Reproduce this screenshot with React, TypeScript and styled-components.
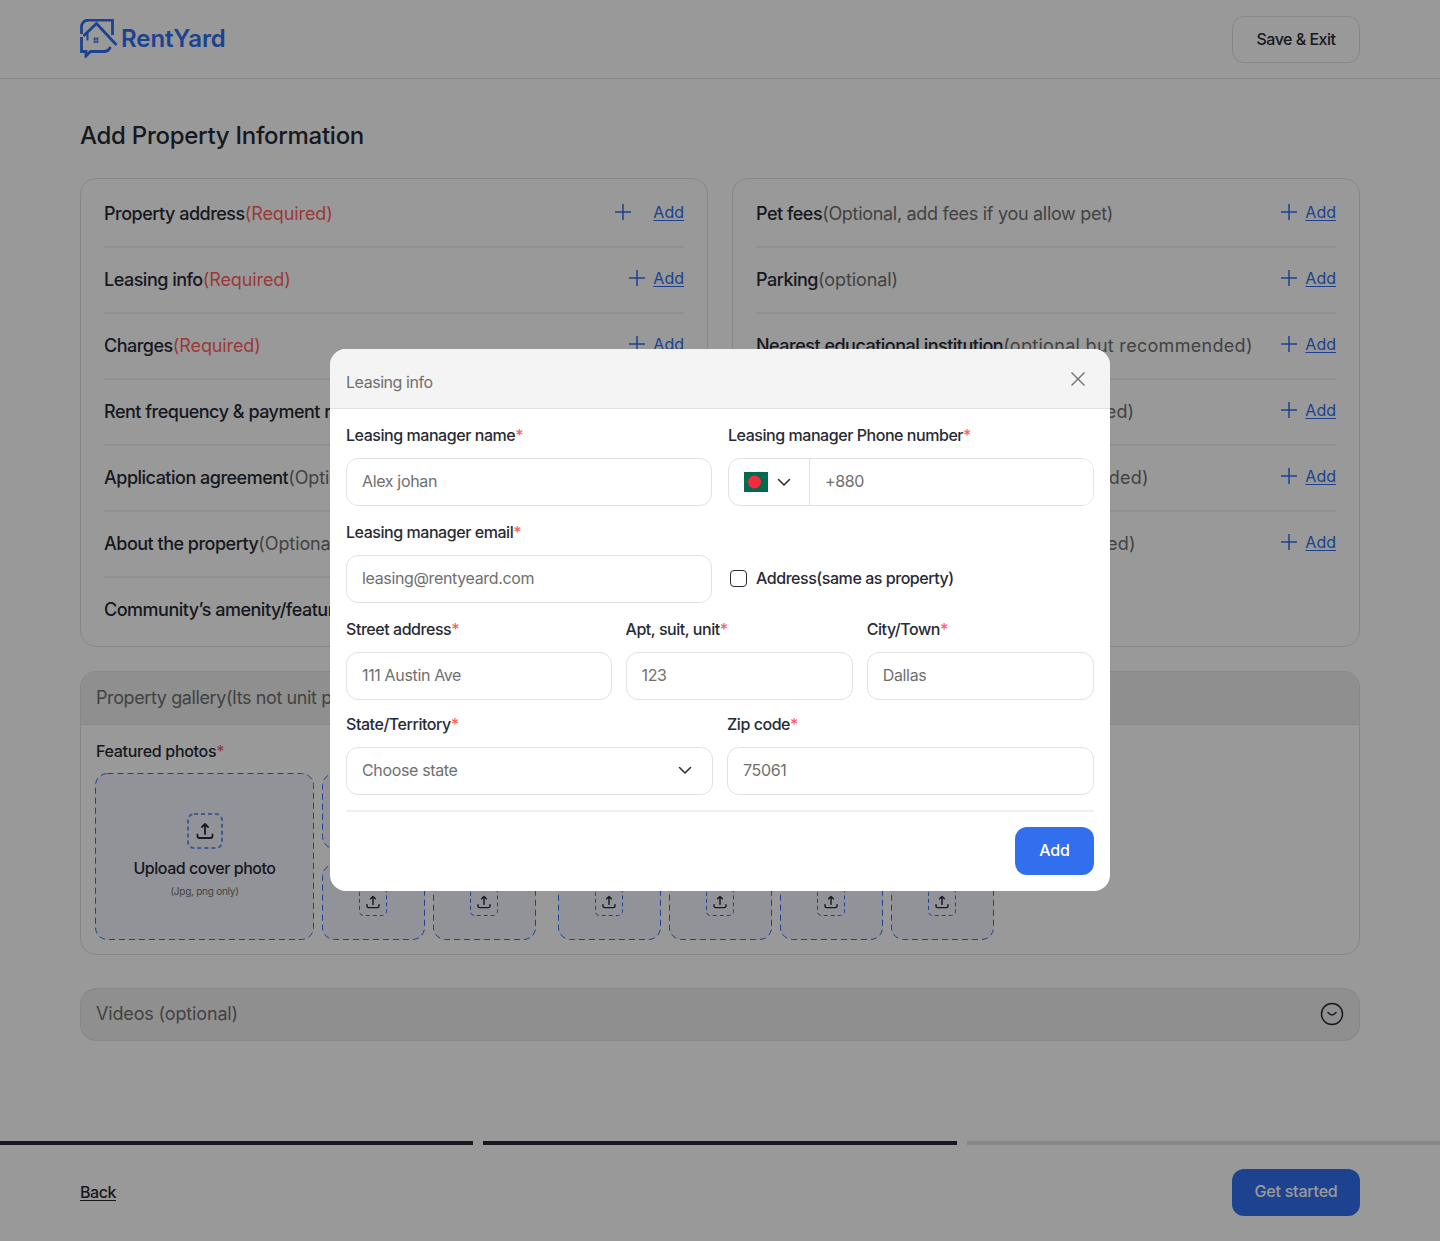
import React from "react";
import styled, { createGlobalStyle } from "styled-components";

const FONT = `Inter, "Noto Sans", "Liberation Sans", sans-serif`;
const INK = "#272b35";
const MUTED = "#6f6f6f";
const BLUE = "#316fee";
const RED = "#ff5f5f";
const LINE = "#e2e2e2";

const Global = createGlobalStyle`
  * { box-sizing: border-box; }
  html, body { margin: 0; padding: 0; background: #fff; }
  body { font-family: ${FONT}; color: ${INK}; font-size: 16px; letter-spacing: -0.45px; font-weight: 450; }
`;

const Page = styled.div`
  min-height: 1241px;
  display: flex;
  flex-direction: column;
  overflow: hidden;
`;
const Header = styled.header`
  height: 79px;
  border-bottom: 1px solid ${LINE};
  padding: 16px 80px 0;
  display: flex;
  justify-content: space-between;
  align-items: flex-start;
`;
const Brand = styled.div`
  display: flex;
  align-items: center;
  gap: 3px;
  padding-top: 3px;
  color: ${BLUE};
  font-size: 24px;
  font-weight: 600;
  letter-spacing: -0.05px;
`;
const OutlineButton = styled.button`
  width: 128px;
  height: 47px;
  border: 1px solid ${LINE};
  border-radius: 12px;
  background: #fff;
  padding: 0 0 2px;
  font: 450 16px ${FONT};
  letter-spacing: -0.5px;
  color: ${INK};
`;
const Main = styled.main`
  flex: 1;
  padding: 41px 80px 0;
`;
const Title = styled.h1`
  margin: 0 0 26px;
  font-size: 24px;
  line-height: 32px;
  font-weight: 500;
  letter-spacing: -0.28px;
`;
const Columns = styled.div`
  display: grid;
  grid-template-columns: 628px 628px;
  gap: 24px;
`;
const ListCard = styled.section`
  border: 1px solid ${LINE};
  border-radius: 16px;
  height: 469px;
  padding: 3px 23px 0;
`;
const Row = styled.div`
  height: 66px;
  display: flex;
  align-items: center;
  justify-content: space-between;
  border-bottom: 2px solid #efefef;
  white-space: nowrap;
  &:last-child { border-bottom-color: transparent; }
`;
const RowLabel = styled.div`
  font-size: 18px;
  letter-spacing: -0.5px;
  padding-bottom: 2px;
`;
const Note = styled.span<{ $required?: boolean; $spacing: number }>`
  font-weight: 400;
  letter-spacing: ${(p) => p.$spacing}px;
  color: ${(p) => (p.$required ? RED : MUTED)};
`;
const AddGroup = styled.div<{ $wide?: boolean }>`
  display: flex;
  align-items: center;
  gap: ${(p) => (p.$wide ? "20px" : "6px")};
  margin-bottom: 4px;
  color: ${BLUE};
`;
const AddLink = styled.a`
  font-size: 16px;
  font-weight: 400;
  letter-spacing: 0;
  color: ${BLUE};
  text-decoration: underline;
  text-underline-offset: 2px;
`;
const GalleryCard = styled.section`
  margin-top: 24px;
  height: 284px;
  border: 1px solid ${LINE};
  border-radius: 16px;
  overflow: hidden;
`;
const SectionHead = styled.div`
  height: 53px;
  padding: 0 15px 2px;
  display: flex;
  align-items: center;
  justify-content: space-between;
  background: #eeeeee;
  border-bottom: 1px solid ${LINE};
  font-size: 18px;
  font-weight: 400;
  color: ${MUTED};
  letter-spacing: -0.4px;
`;
const GalleryBody = styled.div`
  padding: 16px 14px 0;
`;
const GalleryLabel = styled.div`
  font-size: 16px;
  line-height: 20px;
  letter-spacing: -0.3px;
  margin: 0 0 12px 1px;
`;
const Uploads = styled.div`
  display: flex;
  gap: 8px;
`;
const Cover = styled.div`
  position: relative;
  width: 219px;
  height: 167px;
  border-radius: 12px;
  background: #f3f5fd;
  display: flex;
  flex-direction: column;
  align-items: center;
  padding-top: 40px;
`;
const DashSvg = styled.svg`
  position: absolute;
  inset: 0;
  width: 100%;
  height: 100%;
  pointer-events: none;
`;
const DashRect = styled.rect<{ $stroke: number }>`
  x: ${(p) => p.$stroke / 2}px;
  y: ${(p) => p.$stroke / 2}px;
  width: calc(100% - ${(p) => p.$stroke}px);
  height: calc(100% - ${(p) => p.$stroke}px);
  fill: none;
`;
const IconFrame = styled.div<{ $size: number }>`
  position: relative;
  width: ${(p) => p.$size}px;
  height: ${(p) => p.$size}px;
  display: flex;
  align-items: center;
  justify-content: center;
`;
const CoverTitle = styled.div`
  margin-top: 9px;
  font-size: 16px;
  line-height: 20px;
`;
const CoverHint = styled.div`
  margin-top: 6px;
  font-size: 10px;
  line-height: 14px;
  font-weight: 400;
  letter-spacing: -0.25px;
  color: ${MUTED};
`;
const TileGroup = styled.div<{ $cols: number; $gapLeft?: boolean }>`
  display: grid;
  grid-template-columns: repeat(${(p) => p.$cols}, 103px);
  grid-auto-rows: 76px;
  column-gap: 8px;
  row-gap: 15px;
  margin-left: ${(p) => (p.$gapLeft ? "14px" : "0")};
`;
const Tile = styled.div`
  position: relative;
  border-radius: 12px;
  background: #f3f5fd;
  padding: 0 1px 1px 0;
  display: flex;
  align-items: center;
  justify-content: center;
`;
const VideoBar = styled.section`
  margin-top: 33px;
  height: 53px;
  border: 1px solid ${LINE};
  border-radius: 16px;
  padding: 0 15px 2px;
  display: flex;
  align-items: center;
  justify-content: space-between;
  background: #eeeeee;
  font-size: 18px;
  font-weight: 400;
  color: ${MUTED};
  letter-spacing: -0.15px;
`;
const Progress = styled.div`
  display: flex;
  gap: 10px;
`;
const ProgressBar = styled.div<{ $done?: boolean }>`
  flex: 1;
  height: 4px;
  background: ${(p) => (p.$done ? INK : "#e2e2e2")};
`;
const Footer = styled.footer`
  height: 96px;
  padding: 24px 80px 0;
  display: flex;
  justify-content: space-between;
  align-items: flex-start;
`;
const BackLink = styled.a`
  margin-top: 13px;
  font-size: 16px;
  color: ${INK};
  text-decoration: underline;
  text-underline-offset: 2px;
`;
const PrimaryButton = styled.button<{ $w: number; $h: number }>`
  width: ${(p) => p.$w}px;
  height: ${(p) => p.$h}px;
  border: 0;
  border-radius: 12px;
  background: ${BLUE};
  color: #fff;
  padding: 0 0 3px;
  font: 500 16px ${FONT};
  letter-spacing: -0.2px;
`;
const Overlay = styled.div`
  position: fixed;
  inset: 0;
  background: rgba(0, 0, 0, 0.4);
  display: flex;
  align-items: center;
  justify-content: center;
`;
const Modal = styled.div`
  width: 780px;
  height: 542px;
  margin-bottom: 1px;
  background: #fff;
  border-radius: 16px;
  overflow: hidden;
`;
const ModalHead = styled.div`
  height: 60px;
  background: #f4f4f4;
  border-bottom: 1px solid ${LINE};
  padding: 0 22px 0 16px;
  display: flex;
  justify-content: space-between;
  align-items: center;
`;
const ModalTitle = styled.div`
  font-size: 16px;
  font-weight: 400;
  letter-spacing: -0.45px;
  color: ${MUTED};
  padding-top: 7px;
`;
const CloseBtn = styled.div`
  display: flex;
  color: ${MUTED};
`;
const ModalBody = styled.div`
  padding: 16px 16px 0;
`;
const FormRow = styled.div<{ $cols: string; $gap: number; $mb: number }>`
  display: grid;
  grid-template-columns: ${(p) => p.$cols};
  column-gap: ${(p) => p.$gap}px;
  margin-bottom: ${(p) => p.$mb}px;
`;
const FieldLabel = styled.label`
  display: block;
  height: 20px;
  line-height: 20px;
  margin-bottom: 13px;
  font-size: 16px;
  white-space: nowrap;
`;
const Star = styled.span`
  color: ${RED};
`;
const TextInput = styled.input`
  display: block;
  width: 100%;
  height: 48px;
  border: 1px solid ${LINE};
  border-radius: 12px;
  background: #fff;
  padding: 0 15px 2px;
  font: 400 16px ${FONT};
  letter-spacing: -0.35px;
  outline: none;
  &::placeholder { color: ${MUTED}; opacity: 1; }
`;
const PhoneBox = styled.div`
  height: 48px;
  border: 1px solid ${LINE};
  border-radius: 12px;
  display: flex;
  overflow: hidden;
`;
const CountryPick = styled.div`
  width: 81px;
  flex: none;
  border-right: 1px solid ${LINE};
  padding-left: 15px;
  display: flex;
  align-items: center;
  gap: 8px;
`;
const PhoneInput = styled(TextInput)`
  border: 0;
  border-radius: 0;
  height: 46px;
`;
const SelectBox = styled.div`
  height: 48px;
  border: 1px solid ${LINE};
  border-radius: 12px;
  padding: 0 19px 2px 15px;
  display: flex;
  align-items: center;
  justify-content: space-between;
  font-weight: 400;
  letter-spacing: -0.35px;
  color: ${MUTED};
`;
const CheckRow = styled.div`
  display: flex;
  align-items: center;
  gap: 9px;
  height: 48px;
  margin-top: 32px;
  padding-left: 2px;
  white-space: nowrap;
`;
const CheckBox = styled.span`
  width: 17px;
  height: 17px;
  border: 1.5px solid ${INK};
  border-radius: 4px;
`;
const Divider = styled.div`
  height: 2px;
  background: #efefef;
  margin-bottom: 15px;
`;
const ModalActions = styled.div`
  display: flex;
  justify-content: flex-end;
`;

const Dashes = ({ radius, stroke, dash, opacity = 1 }: { radius: number; stroke: number; dash: string; opacity?: number }) => (
  <DashSvg aria-hidden="true">
    <DashRect $stroke={stroke} rx={radius} stroke={BLUE} strokeWidth={stroke} strokeDasharray={dash} opacity={opacity} />
  </DashSvg>
);
const Plus = () => (
  <svg width="20" height="20" viewBox="0 0 20 20" fill="none" stroke="currentColor" strokeWidth="1.5">
    <path d="M10 2v16M2 10h16" />
  </svg>
);
const Chevron = ({ w = 16 }: { w?: number }) => (
  <svg width={w} height={w} viewBox="0 0 16 16" fill="none" stroke={INK} strokeWidth="1.5" strokeLinecap="round" strokeLinejoin="round">
    <path d="M2.500 5.500 8 11l5.500-5.500" />
  </svg>
);
const UploadIcon = ({ size }: { size: number }) => (
  <svg width={size} height={size} viewBox="0 0 20 20" fill="none" stroke={INK} strokeWidth="1.8" strokeLinecap="round" strokeLinejoin="round">
    <path d="M10 13V3M7 6 10 3l3 3" />
    <path d="M2.500 13.500v1.500a2 2 0 0 0 2 2h11a2 2 0 0 0 2-2v-1.500" />
  </svg>
);
const CircleDown = () => (
  <svg width="24" height="24" viewBox="0 0 24 24" fill="none" stroke={INK} strokeWidth="1.5" strokeLinecap="round" strokeLinejoin="round">
    <circle cx="12" cy="12" r="10.500" />
    <path d="M8 10.500c1.500 1.600 2.800 2.500 4 2.500s2.500-.9 4-2.500" />
  </svg>
);
const CloseIcon = () => (
  <svg width="20" height="20" viewBox="0 0 20 20" fill="none" stroke="currentColor" strokeWidth="1.4">
    <path d="M3.500 3.500l13 13M16.500 3.500l-13 13" />
  </svg>
);
const Flag = () => (
  <svg width="24" height="20" viewBox="0 0 24 20">
    <rect width="24" height="20" fill="#006a4e" />
    <circle cx="10.500" cy="10" r="6.500" fill="#f42a41" />
  </svg>
);
const Logo = () => (
  <svg width="38" height="39" viewBox="0 0 38 39" fill="none" stroke={BLUE} strokeWidth="2.8">
    <path d="M1.500 15V8a7 7 0 0 1 7-7H32.500v15" />
    <path d="M1.500 18V32.500H6V37l4.500-4.500H24c3 0 5-1.500 6.500-4.500" />
    <path d="M3.500 17 16.500 4.500 36.500 26" />
    <path d="M7.500 13.500v8" strokeWidth="2" />
    <g fill={BLUE} stroke="none">
      <rect x="13.700" y="18.500" width="2" height="2.400" />
      <rect x="16.300" y="18.500" width="2" height="2.400" />
      <rect x="13.700" y="21.500" width="2" height="2.400" />
      <rect x="16.300" y="21.500" width="2" height="2.400" />
    </g>
  </svg>
);

const leftRows = [
  ["Property address", "(Required)", true],
  ["Leasing info", "(Required)", true],
  ["Charges", "(Required)", true],
  ["Rent frequency & payment reminder", "(Required)", true],
  ["Application agreement", "(Optional)", false],
  ["About the property", "(Optional)", false],
  ["Community’s amenity/features", "(Optional but recommended)", false],
] as const;
const rightRows = [
  ["Pet fees", "(Optional, add fees if you allow pet)", -0.3],
  ["Parking", "(optional)", -0.1],
  ["Nearest educational institution", "(optional but recommended)", 0.3],
  ["Nearest stations", "(optional but recommended)", 0.15],
  ["Nearest landmark", "(optional but recommended)", 0.25],
  ["Utilities provider", "(optional but recommended)", 0.25],
] as const;

const UploadTile = () => (
  <Tile>
    <Dashes radius={12} stroke={1} dash="6 4" />
    <IconFrame $size={28}>
      <Dashes radius={4} stroke={1} dash="4 3" />
      <UploadIcon size={16} />
    </IconFrame>
  </Tile>
);

export default function App() {
  return (
    <Page>
      <Global />
      <Header>
        <Brand>
          <Logo />
          RentYard
        </Brand>
        <OutlineButton>Save &amp; Exit</OutlineButton>
      </Header>
      <Main>
        <Title>Add Property Information</Title>
        <Columns>
          <ListCard>
            {leftRows.map(([label, note, req], i) => (
              <Row key={label}>
                <RowLabel>
                  {label}
                  <Note $required={req} $spacing={-0.1}>{note}</Note>
                </RowLabel>
                <AddGroup $wide={i === 0}>
                  <Plus />
                  <AddLink>Add</AddLink>
                </AddGroup>
              </Row>
            ))}
          </ListCard>
          <ListCard>
            {rightRows.map(([label, note, spacing]) => (
              <Row key={label}>
                <RowLabel>
                  {label}
                  <Note $spacing={spacing}>{note}</Note>
                </RowLabel>
                <AddGroup>
                  <Plus />
                  <AddLink>Add</AddLink>
                </AddGroup>
              </Row>
            ))}
          </ListCard>
        </Columns>
        <GalleryCard>
          <SectionHead>Property gallery(Its not unit photo)</SectionHead>
          <GalleryBody>
            <GalleryLabel>
              Featured photos<Star>*</Star>
            </GalleryLabel>
            <Uploads>
              <Cover>
                <Dashes radius={12} stroke={1} dash="6 4" />
                <IconFrame $size={36}>
                  <Dashes radius={6} stroke={2} dash="4 3" opacity={0.7} />
                  <UploadIcon size={20} />
                </IconFrame>
                <CoverTitle>Upload cover photo</CoverTitle>
                <CoverHint>(Jpg, png only)</CoverHint>
              </Cover>
              <TileGroup $cols={2}>
                {[0, 1, 2, 3].map((k) => (
                  <UploadTile key={k} />
                ))}
              </TileGroup>
              <TileGroup $cols={4} $gapLeft>
                {[0, 1, 2, 3, 4, 5, 6, 7].map((k) => (
                  <UploadTile key={k} />
                ))}
              </TileGroup>
            </Uploads>
          </GalleryBody>
        </GalleryCard>
        <VideoBar>
          Videos (optional)
          <CircleDown />
        </VideoBar>
      </Main>
      <Progress>
        <ProgressBar $done />
        <ProgressBar $done />
        <ProgressBar />
      </Progress>
      <Footer>
        <BackLink>Back</BackLink>
        <PrimaryButton $w={128} $h={47}>Get started</PrimaryButton>
      </Footer>
      <Overlay>
        <Modal>
          <ModalHead>
            <ModalTitle>Leasing info</ModalTitle>
            <CloseBtn>
              <CloseIcon />
            </CloseBtn>
          </ModalHead>
          <ModalBody>
            <FormRow $cols="366px 366px" $gap={16} $mb={16}>
              <div>
                <FieldLabel>Leasing manager name<Star>*</Star></FieldLabel>
                <TextInput placeholder="Alex johan" />
              </div>
              <div>
                <FieldLabel>Leasing manager Phone number<Star>*</Star></FieldLabel>
                <PhoneBox>
                  <CountryPick>
                    <Flag />
                    <Chevron />
                  </CountryPick>
                  <PhoneInput placeholder="+880" />
                </PhoneBox>
              </div>
            </FormRow>
            <FormRow $cols="366px 366px" $gap={16} $mb={16}>
              <div>
                <FieldLabel>Leasing manager email<Star>*</Star></FieldLabel>
                <TextInput placeholder="leasing@rentyeard.com" />
              </div>
              <CheckRow>
                <CheckBox />
                Address(same as property)
              </CheckRow>
            </FormRow>
            <FormRow $cols="265.5px 227.25px 227.25px" $gap={14} $mb={14}>
              <div>
                <FieldLabel>Street address<Star>*</Star></FieldLabel>
                <TextInput placeholder="111 Austin Ave" />
              </div>
              <div>
                <FieldLabel>Apt, suit, unit<Star>*</Star></FieldLabel>
                <TextInput placeholder="123" />
              </div>
              <div>
                <FieldLabel>City/Town<Star>*</Star></FieldLabel>
                <TextInput placeholder="Dallas" />
              </div>
            </FormRow>
            <FormRow $cols="367px 367px" $gap={14} $mb={15}>
              <div>
                <FieldLabel>State/Territory<Star>*</Star></FieldLabel>
                <SelectBox>
                  Choose state
                  <Chevron />
                </SelectBox>
              </div>
              <div>
                <FieldLabel>Zip code<Star>*</Star></FieldLabel>
                <TextInput placeholder="75061" />
              </div>
            </FormRow>
            <Divider />
            <ModalActions>
              <PrimaryButton $w={79} $h={48}>Add</PrimaryButton>
            </ModalActions>
          </ModalBody>
        </Modal>
      </Overlay>
    </Page>
  );
}
